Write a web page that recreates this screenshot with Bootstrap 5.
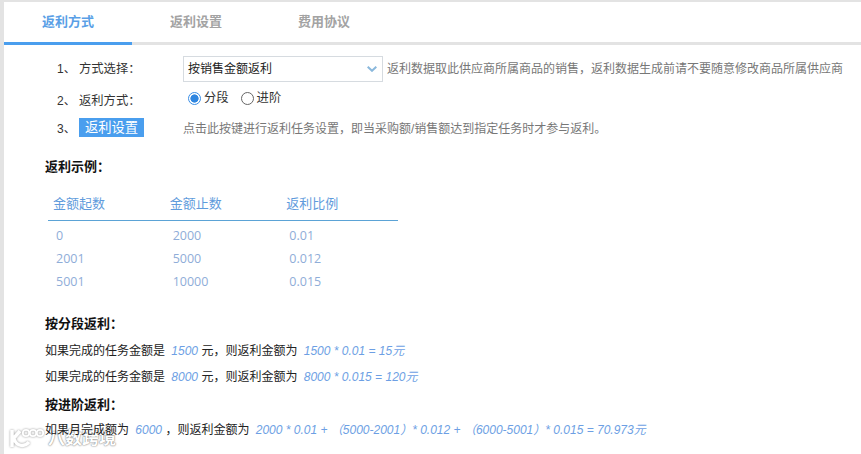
<!DOCTYPE html>
<html lang="zh">
<head>
<meta charset="utf-8">
<title>返利方式</title>
<link href="https://cdn.jsdelivr.net/npm/bootstrap@5.3.0/dist/css/bootstrap.min.css" rel="stylesheet">
<style>
html,body{height:100%;overflow:hidden}
body{font-family:"Liberation Sans","Noto Sans CJK SC",sans-serif;font-size:12px;color:#333;background:#fff;position:relative}
.shell{height:454px;border-left:4px solid #e3e3e3;border-top:2px solid #e3e3e3;position:relative;overflow:hidden}
.tabbar{height:43px;border-bottom:3px solid #e3e3e3}
.tabbar .tabitem{width:128px;height:43px;line-height:40px;text-align:center;font-size:13px;font-weight:700;color:#a3a3a3;margin-bottom:-3px;border-bottom:3px solid transparent}
.tabbar .tabitem.on{color:#5a9fe6;border-bottom-color:#4a9eee}
.opts{padding:11px 0 0 53px}
.optrow{display:flex;align-items:center}
.optrow.r1{height:26px}
.optrow.r2{height:24px;margin-top:6px}
.optrow.r3{height:19px;margin-top:6px}
.optrow.r2 .idx,.optrow.r2 .lbl,.optrow.r3 .idx,.optrow.r3 .note{padding-top:2px}
.idx{width:22px;color:#333}
.lbl{width:104px;color:#333;font-size:12.3px}
.fakesel{width:200px;height:26px;border:1px solid #d6dbe0;padding-left:4px;font-size:12px;color:#222;display:flex;align-items:center;justify-content:space-between;padding-right:5px;margin-right:4px}
.note{color:#777;font-size:12px;white-space:nowrap}
.rad{display:flex;align-items:center;gap:3px;margin:-4px 0 0 5px;color:#333;font-size:12.3px}
.rad + .rad{margin-left:12px}
.dot{width:13px;height:13px;border-radius:50%;border:1px solid #666;display:inline-block;background:#fff}
.dot.sel{border:1.5px solid #3a8ee6;background:radial-gradient(circle,#2f86e0 0 3.8px,#fff 4.4px)}
.setbtn{width:65px;height:19px;line-height:18px;background:#4a9eee;color:#fff;border:0;border-radius:0;padding:1px 0 0;font-size:13.3px;margin-right:39px;text-align:center}
.setbtn:hover{background:#4a9eee;color:#fff}
.body-area{padding:22px 0 0 41px;position:relative;z-index:1}
.sect{font-weight:700;color:#111;font-size:13px;line-height:16px;margin:0}
.ratetable{width:350px;margin:12px 0 0 3px;border-collapse:collapse;table-layout:fixed}
.ratetable th{font-weight:400;color:#5f9bdc;font-size:13px;height:33px;padding:0 0 0 5px;border-bottom:1px solid #5ba3d6;vertical-align:middle}
.ratetable td{color:#8fadd8;font-size:12.5px;height:23px;padding:0 0 0 8px;font-family:"Open Sans","Noto Sans CJK SC",sans-serif}
.ratetable tr.firstrow td{padding-top:5px;height:28px}
.line{line-height:16px;color:#222;white-space:nowrap;margin:10px 0 0}
.line em{color:#6d9fe4;font-style:italic;margin:0 0 0 3px}
.gap1{margin-top:22px}
.gap1 + .line{margin-top:11px}
.gap2{margin-top:12px}
.gap2 + .line{margin-top:9px}
.wmark{position:absolute;left:5px;top:425px;display:flex;align-items:flex-end;gap:3px;color:#fff;font-size:17px;line-height:20px;font-weight:700;text-shadow:0 0 2px #888,0 0 1px #888;white-space:nowrap}
.wmark svg{filter:drop-shadow(0 0 1px #999)}
</style>
</head>
<body>
<div class="shell">
  <div class="tabbar d-flex">
    <div class="tabitem on">返利方式</div>
    <div class="tabitem">返利设置</div>
    <div class="tabitem">费用协议</div>
  </div>
  <div class="opts">
    <div class="optrow r1">
      <span class="idx">1、</span><span class="lbl">方式选择：</span>
      <div class="fakesel"><span>按销售金额返利</span>
        <svg width="10" height="6" viewBox="0 0 10 6"><path d="M.7 .8 5 4.8 9.3 .8" fill="none" stroke="#8ab8dc" stroke-width="2"/></svg></div>
      <span class="note">返利数据取此供应商所属商品的销售，返利数据生成前请不要随意修改商品所属供应商</span>
    </div>
    <div class="optrow r2">
      <span class="idx">2、</span><span class="lbl">返利方式：</span>
      <label class="rad"><span class="dot sel"></span>分段</label>
      <label class="rad"><span class="dot"></span>进阶</label>
    </div>
    <div class="optrow r3">
      <span class="idx">3、</span>
      <button type="button" class="btn setbtn">返利设置</button>
      <span class="note">点击此按键进行返利任务设置，即当采购额/销售额达到指定任务时才参与返利。</span>
    </div>
  </div>
  <div class="body-area">
    <p class="sect">返利示例：</p>
    <table class="ratetable">
      <thead><tr><th>金额起数</th><th>金额止数</th><th>返利比例</th></tr></thead>
      <tbody>
        <tr class="firstrow"><td>0</td><td>2000</td><td>0.01</td></tr>
        <tr><td>2001</td><td>5000</td><td>0.012</td></tr>
        <tr><td>5001</td><td>10000</td><td>0.015</td></tr>
      </tbody>
    </table>
    <p class="sect gap1">按分段返利：</p>
    <p class="line">如果完成的任务金额是 <em>1500</em> 元，则返利金额为 <em>1500 * 0.01 = 15元</em></p>
    <p class="line">如果完成的任务金额是 <em>8000</em> 元，则返利金额为 <em>8000 * 0.015 = 120元</em></p>
    <p class="sect gap2">按进阶返利：</p>
    <p class="line">如果月完成额为 <em>6000</em> ，则返利金额为 <em>2000 * 0.01 + （5000-2001）* 0.012 + （6000-5001）* 0.015 = 70.973元</em></p>
  </div>
  <div class="wmark">
    <svg width="36" height="22" viewBox="0 0 36 22"><path d="M3 3v17M4 12l7-8M5 12c3 8 11 8 15 3" fill="none" stroke="#fff" stroke-width="3.5"/><circle cx="17" cy="6" r="3.2" fill="none" stroke="#fff" stroke-width="1.8"/><circle cx="24" cy="6" r="3.2" fill="none" stroke="#fff" stroke-width="1.8"/><circle cx="31" cy="6" r="3.2" fill="none" stroke="#fff" stroke-width="1.8"/></svg>
    <span>八数跨境</span>
  </div>
</div>
<script src="https://cdn.jsdelivr.net/npm/bootstrap@5.3.0/dist/js/bootstrap.bundle.min.js"></script>
</body>
</html>
